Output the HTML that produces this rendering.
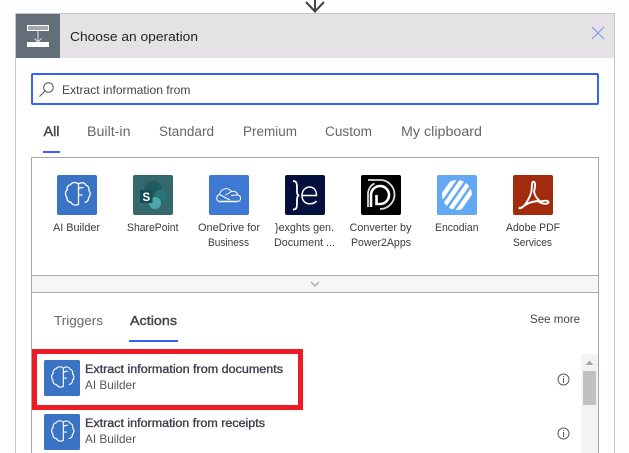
<!DOCTYPE html>
<html><head><meta charset="utf-8"><style>
html,body{margin:0;padding:0;width:629px;height:453px;overflow:hidden;background:#fdfcfe}
svg{display:block}
text{font-family:"Liberation Sans",sans-serif;fill:#3b3a39;font-size:11px}
</style></head><body>
<svg width="629" height="453" viewBox="0 0 629 453" xmlns="http://www.w3.org/2000/svg">
<defs>
<symbol id="brain" viewBox="0 0 40 40" overflow="visible">
<rect width="40" height="40" rx="2" fill="#3a73c4"/>
<path d="M21.500 9C19 6.800 15 7 13.500 9.800C11 10 9.500 12.500 10.300 14.800C8 16.500 7.800 20.500 10 22.300C9.500 25 11.300 27.300 14 27.300C15 30 19 31 21.500 29.300V9ZM21.500 9C24 6.800 28 7.500 29 10.300C31.300 10.800 32.500 13.300 31.700 15.300C33.800 17 33.800 20.800 31.500 22.500C32 25 30 27.300 27.500 27.200M21.500 20H25.500M21.500 16.500V15C21.500 13.300 23.500 12.500 26.500 12.500" fill="none" stroke="#fff" stroke-width="1.250"/>
</symbol>
</defs>
<rect x="15.500" y="13.500" width="599" height="445" fill="#fff" stroke="#c8c6c4"/>
<path d="M306 2L315 11.500L324 2M315 0V12" fill="none" stroke="#444" stroke-width="2"/>
<rect x="16" y="14" width="598" height="44" fill="#e4e2e5"/>
<rect x="16" y="14" width="44" height="44" fill="#646e78"/>
<rect x="27.500" y="25.500" width="21" height="5" fill="#a3a9af" stroke="#fff"/>
<rect x="27" y="42" width="22" height="5" fill="#fff"/>
<path d="M38 31V42M34.500 38.500L38 42L41.500 38.500" fill="none" stroke="#dfe1e3" stroke-width="1"/>
<text x="70" y="41" textLength="128" lengthAdjust="spacingAndGlyphs" style="font-size:13px;fill:#252423">Choose an operation</text>
<path d="M592 27L604 39M604 27L592 39" stroke="#7d97f2" stroke-width="1" fill="none"/>
<rect x="32" y="74" width="566" height="30" fill="#fff" stroke="#3565f0" stroke-width="2" rx="1"/>
<circle cx="48.500" cy="87.500" r="4.800" fill="none" stroke="#555" stroke-width="1"/>
<path d="M45 91L39.500 96.500" stroke="#555" stroke-width="1"/>
<text x="62" y="94" textLength="128.500" lengthAdjust="spacingAndGlyphs" style="font-size:12px;fill:#444">Extract information from</text>
<text x="43.500" y="136" textLength="16" lengthAdjust="spacingAndGlyphs" style="font-size:13.500px;fill:#444;stroke:#444;stroke-width:.4">All</text>
<text x="87" y="136" textLength="43.500" lengthAdjust="spacingAndGlyphs" style="font-size:13.500px;fill:#666">Built-in</text>
<text x="159" y="136" textLength="55" lengthAdjust="spacingAndGlyphs" style="font-size:13.500px;fill:#666">Standard</text>
<text x="243" y="136" textLength="54" lengthAdjust="spacingAndGlyphs" style="font-size:13.500px;fill:#666">Premium</text>
<text x="325" y="136" textLength="47" lengthAdjust="spacingAndGlyphs" style="font-size:13.500px;fill:#666">Custom</text>
<text x="401" y="136" textLength="81" lengthAdjust="spacingAndGlyphs" style="font-size:13.500px;fill:#666">My clipboard</text>
<rect x="43" y="151" width="17" height="2" fill="#3565f0"/>
<rect x="31.500" y="157.500" width="567" height="300" fill="#fff" stroke="#a8a6a6"/>
<!-- connector icons -->
<use href="#brain" x="57" y="175" width="40" height="40"/>
<rect x="133" y="175" width="40" height="40" rx="2" fill="#35686c"/>
<circle cx="153" cy="190" r="9" fill="#1f5a5e"/><circle cx="161" cy="196" r="6.500" fill="#2a7478"/><circle cx="155" cy="203" r="6" fill="#4aa8ae"/>
<rect x="140" y="190" width="12.500" height="13" rx="1" fill="#174d51"/>
<text x="142.500" y="201" style="font-size:11.500px;font-weight:bold;fill:#fff">S</text>
<rect x="209" y="175" width="40" height="40" rx="2" fill="#3f79d4"/>
<path d="M219 201.500C216 200.500 216 195.500 219.500 194.500C220.500 189.500 227 186 231.500 191.500C235 190.500 237.500 192.500 237.500 195C241.500 195.500 241.500 201 238 201.500ZM219.500 194.500L230 200M225.500 195L231.500 191.500M231 195.500L237 195" fill="none" stroke="#fff" stroke-width="1"/>
<path d="M219 201.500H238" stroke="#fff" stroke-width="1.500"/>
<rect x="285" y="175" width="40" height="40" rx="2" fill="#03103c"/>
<path d="M293 181C297 181 297 184 297 189C297 193 297 195 299 195.500C297 196 297 198 297 202C297 207 297 209.500 293 209.500" fill="none" stroke="#fff" stroke-width="1.800"/>
<path d="M302.500 195.500H316.500C316.500 190 313.500 187 309.500 187C305 187 302 191 302 195.500C302 200.500 305 203.800 309.500 203.800C312.500 203.800 315 203 316.500 201" fill="none" stroke="#fff" stroke-width="1.500"/>
<rect x="361" y="175" width="40" height="40" rx="2" fill="#000"/>
<path d="M371 207V195A9 9 0 1 1 380 204H376.500V195" fill="none" stroke="#fff" stroke-width="2.600"/>
<path d="M368 180H380A14 14 0 0 1 380 209M368 207V194C368 189 371 185 374.500 183.500" fill="none" stroke="#ddd" stroke-width="1.800"/>
<rect x="437" y="175" width="40" height="40" rx="2" fill="#62a8f2"/>
<clipPath id="enc"><circle cx="457" cy="195" r="15"/></clipPath>
<g clip-path="url(#enc)"><g transform="translate(457 195) rotate(-55)" fill="#fff">
<rect x="-20" y="-13.500" width="40" height="4.500"/><rect x="-20" y="-6.500" width="40" height="4.500"/><rect x="-20" y="0.500" width="40" height="4.500"/><rect x="-20" y="7.500" width="40" height="4.500"/>
</g></g>
<rect x="513" y="175" width="40" height="40" rx="2" fill="#a22a0d"/>
<path d="M519.500 208C522 209.500 528 202 531 193C532.500 188 531 182 533.500 181.500C536 182 535 188 534 192C535.500 197 538 200 541 201.500C544 200.500 549 200 548.500 202.500C546.500 205 541 203.500 538 201C533 201.500 527.500 203 524.500 205.500C522 207.500 519 209 519.500 208Z" fill="none" stroke="#fff" stroke-width="1.900"/>
<text x="53" y="231" textLength="47" lengthAdjust="spacingAndGlyphs">AI Builder</text>
<text x="127" y="231" textLength="51.500" lengthAdjust="spacingAndGlyphs">SharePoint</text>
<text x="198" y="231" textLength="62" lengthAdjust="spacingAndGlyphs">OneDrive for</text>
<text x="208" y="246" textLength="41" lengthAdjust="spacingAndGlyphs">Business</text>
<text x="275" y="231" textLength="59" lengthAdjust="spacingAndGlyphs">}exghts gen.</text>
<text x="274" y="246" textLength="61" lengthAdjust="spacingAndGlyphs">Document ...</text>
<text x="349.500" y="231" textLength="62" lengthAdjust="spacingAndGlyphs">Converter by</text>
<text x="351" y="246" textLength="60" lengthAdjust="spacingAndGlyphs">Power2Apps</text>
<text x="435" y="231" textLength="43.500" lengthAdjust="spacingAndGlyphs">Encodian</text>
<text x="506" y="231" textLength="54" lengthAdjust="spacingAndGlyphs">Adobe PDF</text>
<text x="513" y="246" textLength="39" lengthAdjust="spacingAndGlyphs">Services</text>
<!-- collapse bar -->
<rect x="32" y="276" width="566" height="16" fill="#f6f6f6"/>
<path d="M32 275.500H598M32 292.500H598" stroke="#a8a6a6" stroke-width="1"/>
<path d="M311 282L315 286L319 282" fill="none" stroke="#999" stroke-width="1"/>
<!-- actions tabs -->
<text x="54" y="325" textLength="49" lengthAdjust="spacingAndGlyphs" style="font-size:13px;fill:#666">Triggers</text>
<text x="130" y="325" textLength="47" lengthAdjust="spacingAndGlyphs" style="font-size:13px;fill:#444;stroke:#444;stroke-width:.4">Actions</text>
<rect x="129" y="340" width="49" height="2" fill="#3565f0"/>
<text x="530" y="323" textLength="50" lengthAdjust="spacingAndGlyphs" style="font-size:12px;fill:#444">See more</text>
<!-- scrollbar -->
<rect x="581" y="354" width="17" height="99" fill="#f3f2f4"/>
<path d="M585.500 365L589.500 360.500L593.500 365Z" fill="#a8a6a8"/>
<rect x="583" y="371" width="13" height="34" fill="#c2c0c4"/>
<!-- rows -->
<rect x="34.500" y="351.500" width="266" height="56" fill="#fff" stroke="#ed1c24" stroke-width="5"/>
<use href="#brain" x="44" y="360" width="36" height="36"/>
<text x="85" y="373" textLength="198" lengthAdjust="spacingAndGlyphs" style="font-size:11.500px;fill:#3f3e4c;stroke:#3f3e4c;stroke-width:.35">Extract information from documents</text>
<text x="85" y="389" textLength="51" lengthAdjust="spacingAndGlyphs" style="font-size:12px;fill:#555">AI Builder</text>
<use href="#brain" x="44" y="414" width="36" height="36"/>
<text x="85" y="427" textLength="180" lengthAdjust="spacingAndGlyphs" style="font-size:11.500px;fill:#3f3e4c;stroke:#3f3e4c;stroke-width:.35">Extract information from receipts</text>
<text x="85" y="443" textLength="51" lengthAdjust="spacingAndGlyphs" style="font-size:12px;fill:#555">AI Builder</text>
<g fill="none" stroke="#5a5a6a" stroke-width="1">
<circle cx="563.500" cy="379.500" r="5.500"/><path d="M563.500 378V383M563.500 376V377"/>
<circle cx="563.500" cy="433.500" r="5.500"/><path d="M563.500 432V437M563.500 430V431"/>
</g>
</svg>
</body></html>
